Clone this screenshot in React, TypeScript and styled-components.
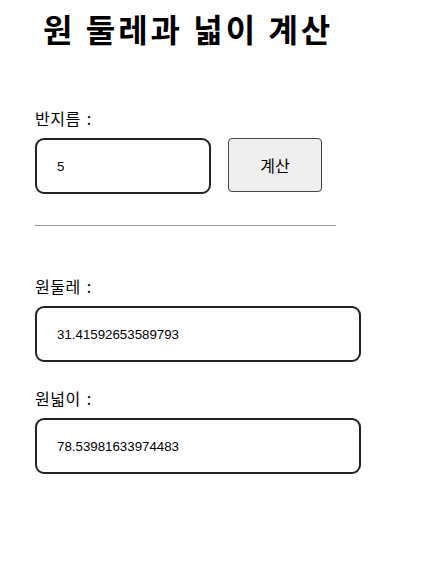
import React, { useState } from "react";
import styled, { createGlobalStyle } from "styled-components";

const GlobalStyle = createGlobalStyle`
  body {
    margin: 0;
    background: #fff;
    font-family: "Noto Sans CJK KR", "Liberation Sans", sans-serif;
    color: #000;
  }
`;

const Page = styled.main`
  padding: 8px 0 0 35px;
  display: flex;
  flex-direction: column;
`;

const Title = styled.h1`
  margin: 0 0 0 8px;
  font-size: 32px;
  line-height: 40px;
  font-weight: 700;
  letter-spacing: 3px;
`;

const Field = styled.section<{ $top: number }>`
  margin-top: ${(p) => p.$top}px;
  display: flex;
  flex-direction: column;
  gap: 11px;
`;

const Label = styled.label`
  font-size: 16px;
  line-height: 17px;
  letter-spacing: 0.5px;
  word-spacing: 2px;
`;

const Row = styled.div`
  display: flex;
  align-items: flex-start;
  gap: 17px;
`;

const Box = styled.input<{ $width: number }>`
  box-sizing: border-box;
  width: ${(p) => p.$width}px;
  height: 56px;
  border: 2px solid #222;
  border-radius: 9px;
  padding: 0 20px;
  font-family: "Liberation Sans", Arial, sans-serif;
  font-size: 13.3px;
  color: #000;
  background: #fff;
  outline: none;
`;

const CalcButton = styled.button`
  box-sizing: border-box;
  width: 94px;
  height: 54px;
  background: #efefef;
  border: 1px solid #444;
  border-radius: 4px;
  font-family: "Noto Sans CJK KR", sans-serif;
  font-size: 16px;
  color: #000;
`;

const Divider = styled.hr`
  width: 301px;
  margin: 31px 0 0;
  border: none;
  border-top: 1px solid #999;
`;

export default function App() {
  const [radius, setRadius] = useState("5");
  const r = parseFloat(radius) || 0;
  const [result, setResult] = useState({
    round: String(2 * Math.PI * 5),
    area: String(Math.PI * 25),
  });

  const calc = () =>
    setResult({ round: String(2 * Math.PI * r), area: String(Math.PI * r * r) });

  return (
    <Page>
      <GlobalStyle />
      <Title>원 둘레과 넓이 계산</Title>
      <Field $top={62}>
        <Label>반지름 :</Label>
        <Row>
          <Box $width={176} value={radius} onChange={(e) => setRadius(e.target.value)} />
          <CalcButton onClick={calc}>계산</CalcButton>
        </Row>
      </Field>
      <Divider />
      <Field $top={52}>
        <Label>원둘레 :</Label>
        <Box $width={326} value={result.round} readOnly />
      </Field>
      <Field $top={28}>
        <Label>원넓이 :</Label>
        <Box $width={326} value={result.area} readOnly />
      </Field>
    </Page>
  );
}
